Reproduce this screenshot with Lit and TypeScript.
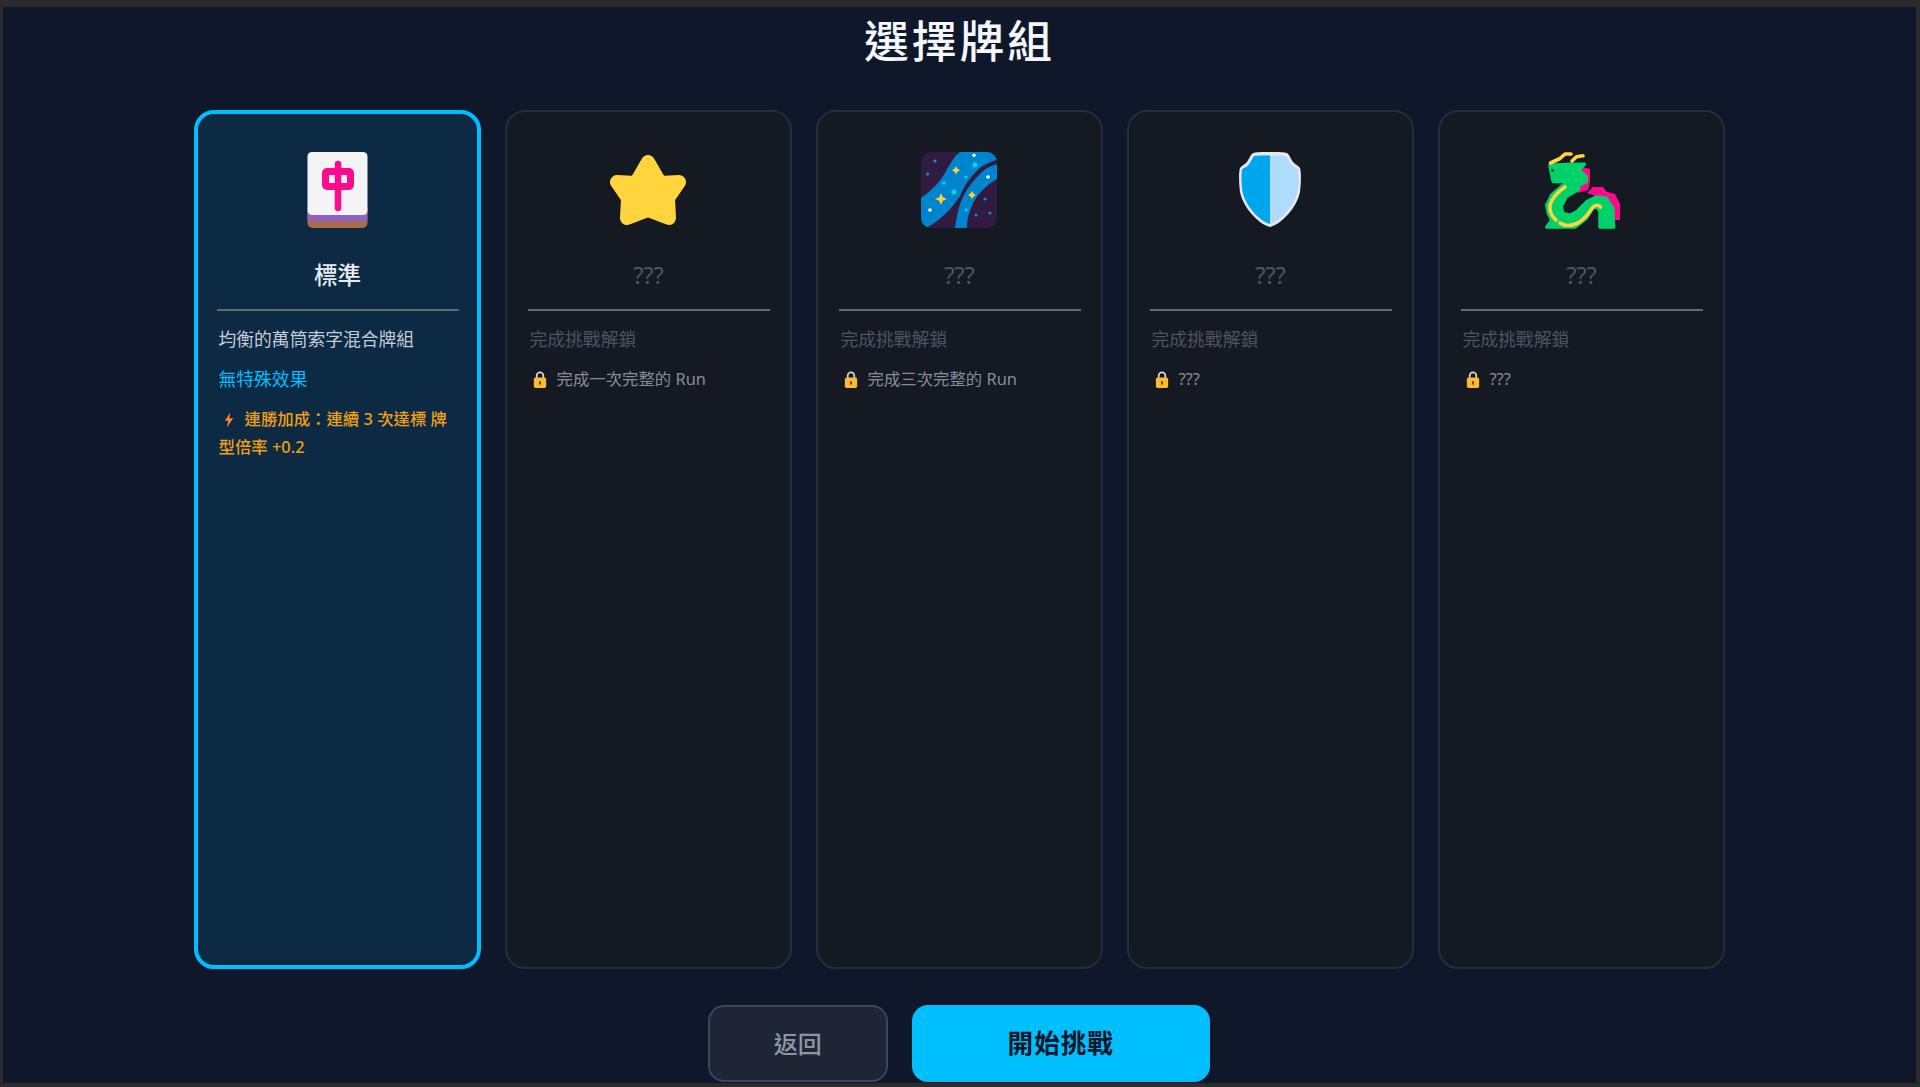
import { LitElement, html, css, svg } from "lit";
import { customElement } from "lit/decorators.js";

const mahjong = svg`<svg viewBox="0 0 76 76" width="76" height="76">
  <path d="M7.500 60h60v11a5 5 0 0 1-5 5h-50a5 5 0 0 1-5-5z" fill="#a96b4c"/>
  <path d="M7.500 56h60v10a3 3 0 0 1-3 3h-54a3 3 0 0 1-3-3z" fill="#8f62c7"/>
  <rect x="7.500" y="0" width="60" height="63" rx="4.500" fill="#f4f4f4"/>
  <path d="M38 12v44" stroke="#ff0a8c" stroke-width="6.500" stroke-linecap="round" fill="none"/>
  <rect x="25.500" y="19.500" width="25" height="15" rx="1.500" fill="none" stroke="#ff0a8c" stroke-width="7"/>
</svg>`;

const star = svg`<svg viewBox="0 0 76 76" width="76" height="76">
  <path d="M38 10L50 31L69 30L58 46L59 66L38 58L17 66L18 46L7 30L26 31Z" fill="#ffd43d" stroke="#ffd43d" stroke-width="14" stroke-linejoin="round"/>
</svg>`;

const galaxy = svg`<svg viewBox="0 0 76 76" width="76" height="76">
  <defs><clipPath id="gal"><rect width="76" height="76" rx="10"/></clipPath></defs>
  <rect width="76" height="76" rx="10" fill="#321b41"/>
  <g clip-path="url(#gal)">
    <path d="M39 0C32 5 30 12 26 17C22 26 14 36 0 46V76H5C18 69 30 58 39 44C44 32 50 24 60 15C65 12 71 9 76 8V0Z" fill="#0084ce"/>
    <path d="M76 12.300C68 14 63 18 59 22C52 29 47 35 44 41C39 50 36 61 34 76H46C46 69 47 64 49 59C51 52 54 47 58 42C63 36 69 31 76 27Z" fill="#0084ce"/>
  </g>
  <g fill="#fff">
    <circle cx="53" cy="3.300" r="1.700"/><circle cx="67" cy="25" r="1.800"/><circle cx="9" cy="58" r="1.800"/>
  </g>
  <g fill="#00d7e8">
    <circle cx="54" cy="13" r="2.500"/><circle cx="33" cy="40" r="2.500"/><circle cx="45" cy="25" r="1.600"/><circle cx="23" cy="31" r="1.700"/><circle cx="45" cy="58" r="1.600"/>
  </g>
  <g fill="#0a8fd8">
    <circle cx="14" cy="9" r="1.600"/><circle cx="6.600" cy="22" r="1.600"/><circle cx="64" cy="47" r="1.500"/><circle cx="55" cy="63" r="1.500"/><circle cx="69" cy="61" r="1.500"/>
  </g>
  <g fill="#ffd23b">
    <path d="M35 14.300l1.500 2.500 2.500 1.500-2.500 1.500-1.500 2.500-1.500-2.500-2.500-1.500 2.500-1.500z"/>
    <path d="M51 39l1.500 2.500 2.500 1.500-2.500 1.500-1.500 2.500-1.500-2.500-2.500-1.500 2.500-1.500z"/>
    <path d="M20 41l1.800 4.200L26 47l-4.200 1.800L20 53l-1.800-4.200L14 47l4.200-1.800z"/>
  </g>
</svg>`;

const shield = svg`<svg viewBox="0 0 76 76" width="76" height="76">
  <path d="M38 0C48 0 52 0 55 1C58 3 59 8 62 11C64 13 67 14 68 16C69.500 20 69 32 68 40C65 55 50 72 38 75C26 72 11 55 8 40C7 32 6.500 20 8 16C9 14 12 13 14 11C17 8 18 3 21 1C24 0 28 0 38 0Z" fill="#e8e8e8"/>
  <path d="M38 3.500V72C27 69 13 53 10.500 39.500C9.500 32 9 24 10 17.500C12 15.500 14 15.500 16 13.500C19 10.500 20 6.500 22 4C25 3.500 31 3.500 38 3.500Z" fill="#00a6ed"/>
  <path d="M38 3.500V72C49 69 63 53 65.500 39.500C66.500 32 67 24 66 17.500C64 15.500 62 15.500 60 13.500C57 10.500 56 6.500 54 4C51 3.500 45 3.500 38 3.500Z" fill="#aedcff"/>
</svg>`;

const dragon = svg`<svg viewBox="0 0 76 76" width="76" height="76" overflow="visible">
  <g transform="translate(2 0)">
    <path d="M36 14L41 16L45 17V30L43 38L32 41Z" fill="#ff0a8c"/>
    <path d="M42 41L48 35L58 35L61.500 39.700L70 42L75 52V68H66V56L61 46L51 44Z" fill="#ff0a8c"/>
    <path d="M4.800 13L28 12L39.800 12L35.800 16.300L33 17.300L41.500 24.700V29.700L34.800 33L33 38L21.500 44.700L16.500 54.700L18 61.300L24.800 63L31.500 59.700L41.500 49.700L51.500 44.700L61.500 46.300L68 56.300L68.800 75.300H54.800V59.700L52 54.700L48 56.300L41.500 66.300L30 75.300H1.500L6.500 68L3 61.300L1.500 53L6.500 43L19.800 31.300L24.800 28L16.500 29.700H8L5.800 19.700Z" fill="#00d26a" stroke="#00d26a" stroke-width="3" stroke-linejoin="round"/>
    <circle cx="7.500" cy="18.500" r="1.300" fill="#151922"/>
    <path d="M5.500 11L15 6.500L20 2H26M27 9L31.500 4.700L38 3.700" fill="none" stroke="#ffd43d" stroke-width="3.600" stroke-linecap="round" stroke-linejoin="round"/>
    <path d="M20 35Q8 43 5 53Q4 62 11 68M15 71Q22 76 33 71Q42 65 47 56Q52 51 55.500 55" fill="none" stroke="#ffd43d" stroke-width="3.600" stroke-linecap="round"/>
  </g>
</svg>`;

const bolt = svg`<svg viewBox="0 0 12 18" width="10" height="16" class="bolt">
  <path d="M7.500 0L1 10h4L3.500 18 11 7H6.500z" fill="#ff822d"/>
</svg>`;

const lock = svg`<svg viewBox="0 0 14 18" width="14" height="17" class="lock">
  <path d="M3.500 8V5a3.500 3.500 0 0 1 7 0v3" fill="none" stroke="#d8d8d8" stroke-width="1.800"/>
  <rect x="0.500" y="7" width="13" height="11" rx="1.800" fill="#fcb932"/>
  <rect x="6" y="10.500" width="2" height="4" rx="1" fill="#5b4320"/>
</svg>`;

const lockedDecks = [
  { icon: star, req: "完成一次完整的 Run" },
  { icon: galaxy, req: "完成三次完整的 Run" },
  { icon: shield, req: "???" },
  { icon: dragon, req: "???" },
];

@customElement("app-root")
export class AppRoot extends LitElement {
  static styles = css`
    :host {
      display: block;
      box-sizing: border-box;
      height: 1087px;
      background: #2b2b2b;
      padding: 7px 4px 4px 3px;
      font-family: "Noto Sans", "Noto Sans CJK TC", sans-serif;
      overflow: hidden;
    }
    .screen {
      height: 100%;
      background: #0f172a;
      display: flex;
      flex-direction: column;
      align-items: center;
      overflow: hidden;
    }
    h1 {
      margin: 0;
      height: 69px;
      line-height: 67px;
      font-size: 44.8px;
      font-weight: 500;
      letter-spacing: 3px;
      color: #f4f7fb;
      flex: none;
    }
    .decks {
      margin-top: 34px;
      display: grid;
      grid-template-columns: repeat(5, 287px);
      gap: 24px;
      flex: none;
    }
    .card {
      box-sizing: border-box;
      height: 859px;
      border: 2px solid #252d3c;
      border-radius: 20px;
      background: #151922;
      padding: 40px 20.5px 0;
      display: flex;
      flex-direction: column;
    }
    .card.selected {
      border: 4px solid #00bfff;
      background: #0c2a44;
      padding: 38px 18.5px 0;
    }
    .icon {
      height: 76px;
      display: flex;
      justify-content: center;
    }
    .locked .icon {
      padding-right: 1.5px;
    }
    .name {
      margin-top: 29px;
      height: 36px;
      line-height: 36px;
      font-size: 23.6px;
      font-weight: 500;
      text-align: center;
      color: #e8ecf2;
    }
    .locked .name {
      font-weight: 400;
      color: #4b5563;
    }
    .rule {
      margin-top: 16px;
      height: 2px;
      background: #666a70;
    }
    .desc {
      margin: 14px 2px 0;
      font-size: 17.8px;
      line-height: 28px;
      color: #c4ccd8;
    }
    .locked .desc {
      color: #4b5563;
    }
    .effect {
      margin: 12px 2px 0;
      font-size: 17.8px;
      line-height: 28px;
      color: #00bfff;
    }
    .streak {
      margin: 12px 2px 0;
      font-size: 16.4px;
      font-weight: 500;
      line-height: 28px;
      color: #f0a010;
    }
    .bolt {
      vertical-align: -3px;
      margin: 0 11px 0 5px;
    }
    .req {
      margin: 12px 2px 0;
      display: flex;
      align-items: center;
      gap: 10px;
      padding-left: 3px;
      font-size: 16.4px;
      line-height: 28px;
      color: #858d9b;
    }
    .lock {
      flex: none;
    }
    .actions {
      margin-top: 36px;
      padding-right: 1.5px;
      display: flex;
      gap: 24px;
      flex: none;
    }
    button {
      box-sizing: border-box;
      height: 77px;
      padding-bottom: 4px;
      border-radius: 16px;
      font-family: inherit;
      cursor: pointer;
    }
    .back {
      width: 180px;
      border: 2px solid #3a4661;
      background: #1e2535;
      color: #8f96a3;
      font-size: 24px;
      font-weight: 500;
    }
    .start {
      width: 298px;
      border: none;
      background: #00bfff;
      color: #0f172a;
      font-size: 25.6px;
      font-weight: 700;
      letter-spacing: 1px;
    }
  `;

  render() {
    return html`<div class="screen">
      <h1>選擇牌組</h1>
      <div class="decks">
        <div class="card selected">
          <div class="icon">${mahjong}</div>
          <div class="name">標準</div>
          <div class="rule"></div>
          <div class="desc">均衡的萬筒索字混合牌組</div>
          <div class="effect">無特殊效果</div>
          <div class="streak">${bolt}連勝加成：連續 3 次達標 牌型倍率 +0.2</div>
        </div>
        ${lockedDecks.map(
          (d) => html`<div class="card locked">
            <div class="icon">${d.icon}</div>
            <div class="name">???</div>
            <div class="rule"></div>
            <div class="desc">完成挑戰解鎖</div>
            <div class="req">${lock}<span>${d.req}</span></div>
          </div>`
        )}
      </div>
      <div class="actions">
        <button class="back">返回</button>
        <button class="start">開始挑戰</button>
      </div>
    </div>`;
  }
}
